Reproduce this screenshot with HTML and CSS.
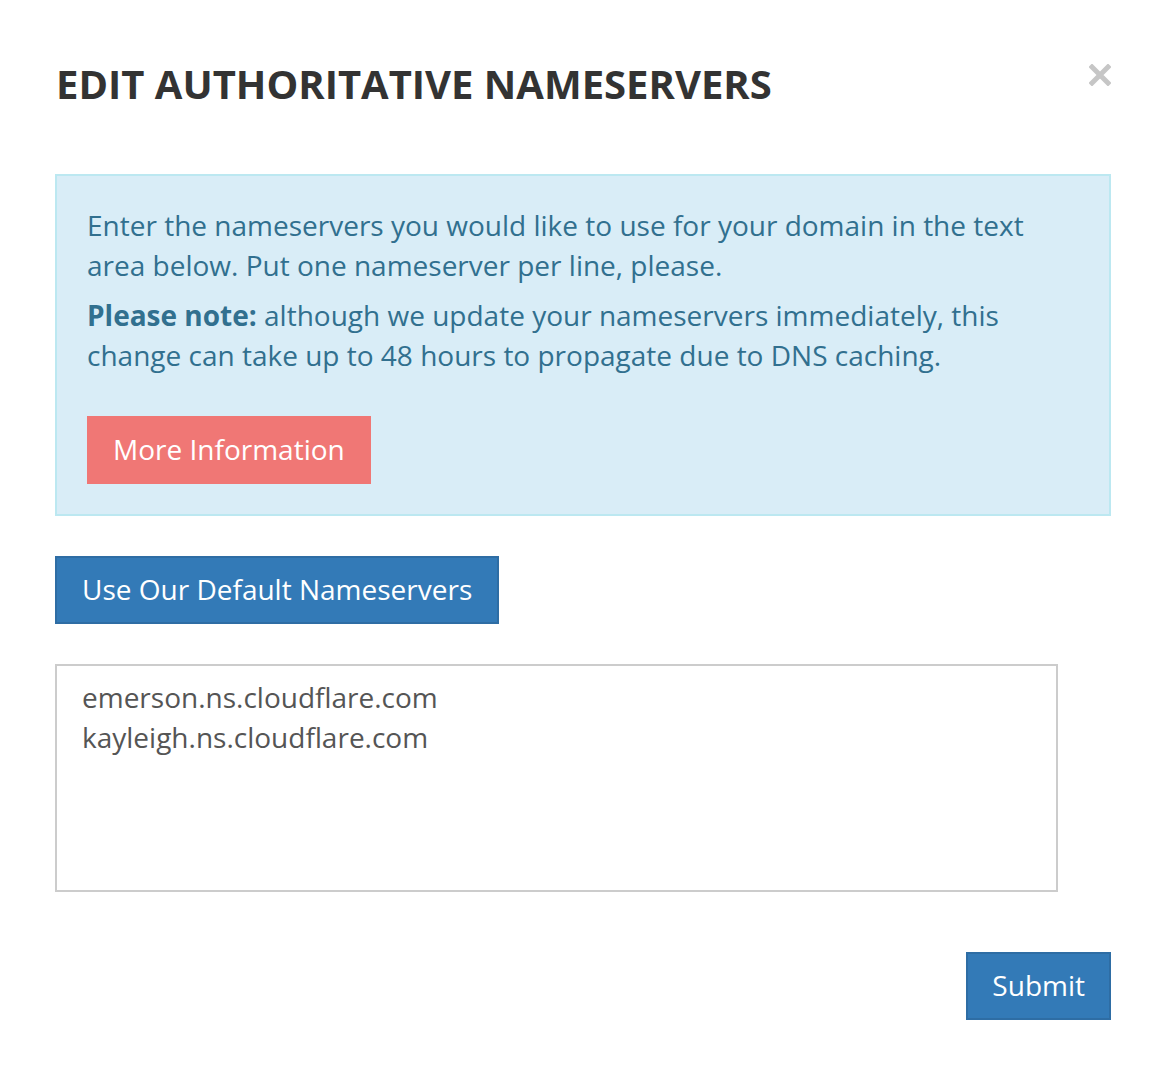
FILE: index.html
```html
<!DOCTYPE html>
<html>
<head>
<meta charset="utf-8">
<link rel="stylesheet" href="styles.css">
</head>
<body>
<div class="modal">
  <div class="modal-header">
    <h1 class="title">EDIT AUTHORITATIVE NAMESERVERS</h1>
    <button class="close" aria-label="Close">
      <svg width="22" height="22" viewBox="0 0 22 22"><path d="M3 3 L19 19 M19 3 L3 19" stroke="#c6c6c6" stroke-width="5" stroke-linecap="square"/></svg>
    </button>
  </div>
  <div class="alert">
    <p>Enter the nameservers you would like to use for your domain in the text area below. Put one nameserver per line, please.</p>
    <p><strong>Please note:</strong> although we update your nameservers immediately, this change can take up to 48 hours to propagate due to DNS caching.</p>
    <button class="btn btn-info">More Information</button>
  </div>
  <div class="row">
    <button class="btn btn-primary">Use Our Default Nameservers</button>
  </div>
  <textarea class="ns-input">emerson.ns.cloudflare.com
kayleigh.ns.cloudflare.com</textarea>
  <div class="footer">
    <button class="btn btn-primary btn-submit">Submit</button>
  </div>
</div>
</body>
</html>
```

FILE: styles.css
```css
html, body {
  margin: 0;
  padding: 0;
  background: #fff;
}
body {
  font-family: "Open Sans", "Noto Sans", sans-serif;
  color: #333;
}
.modal {
  padding: 0 55px;
  display: flex;
  flex-direction: column;
}
.modal-header {
  display: flex;
  justify-content: space-between;
  align-items: flex-start;
  padding-top: 60px;
}
.title {
  margin: 0 0 0 1px;
  font-size: 40px;
  line-height: 48px;
  font-weight: 700;
  color: #333;
}
.close {
  background: none;
  border: 0;
  padding: 0;
  margin-top: 4px;
  cursor: pointer;
  line-height: 0;
}
.alert {
  margin-top: 66px;
  background: #d9edf7;
  border: 2px solid #bce8f1;
  padding: 29px 30px 30px;
  color: #31708f;
  font-size: 28px;
  line-height: 40px;
}
.alert p {
  margin: 0 0 10px;
}
.alert strong {
  font-weight: 700;
}
.btn {
  font-family: "Open Sans", "Noto Sans", sans-serif;
  font-size: 28px;
  line-height: 40px;
  color: #fff;
  border: 2px solid transparent;
  border-radius: 0;
  padding: 11px 25px 13px;
  cursor: pointer;
}
.btn-info {
  background: #f07775;
  border-color: #f07775;
  margin-top: 31px;
  padding-left: 24px;
  padding-right: 24px;
}
.btn-primary {
  background: #337ab7;
  border-color: #2e6da4;
}
.btn-submit {
  padding-left: 24px;
  padding-right: 24px;
}
.row {
  margin-top: 40px;
  display: flex;
}
.ns-input {
  margin-top: 40px;
  width: 1003px;
  height: 228px;
  box-sizing: border-box;
  border: 2px solid #ccc;
  border-radius: 0;
  padding: 11px 25px 13px;
  font-family: "Open Sans", "Noto Sans", sans-serif;
  font-size: 28px;
  line-height: 40px;
  color: #555;
  resize: none;
  outline: none;
}
.footer {
  margin-top: 60px;
  display: flex;
  justify-content: flex-end;
}
```
